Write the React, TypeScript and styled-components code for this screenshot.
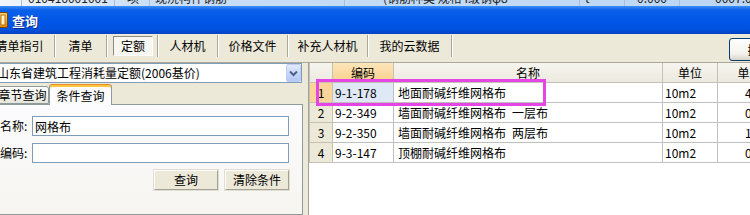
import React from 'react';
import styled, {createGlobalStyle} from 'styled-components';

const GlobalStyle = createGlobalStyle`
  html, body {
    margin: 0;
    padding: 0;
    background: #ece9d8;
  }
  body {
    font-family: "Noto Sans CJK SC", "Noto Sans", sans-serif;
    font-size: 12px;
    color: #000;
  }
`;

type Row = {
    no: number
    code: string
    name: string
    unit: string
    price: string
}

const rows: Row[] = [
    {no: 1, code: '9-1-178', name: '地面耐碱纤维网格布', unit: '10m2', price: '4.58'},
    {no: 2, code: '9-2-349', name: '墙面耐碱纤维网格布\u2002一层布', unit: '10m2', price: '0.91'},
    {no: 3, code: '9-2-350', name: '墙面耐碱纤维网格布\u2002两层布', unit: '10m2', price: '1.73'},
    {no: 4, code: '9-3-147', name: '顶棚耐碱纤维网格布', unit: '10m2', price: '0.62'},
]

const tabs = [
    {label: '清单指引', width: 70},
    {label: '清单', width: 52},
    {label: '定额', width: 51, pressed: true},
    {label: '人材机', width: 60},
    {label: '价格文件', width: 70},
    {label: '补充人材机', width: 80},
    {label: '我的云数据', width: 84},
]

export default function App() {
    return (
        <Window>
            <GlobalStyle/>
            <BackStrip>
                <BackCell $w={22}/>
                <BackCell $w={93} $pad={6}>010416001001</BackCell>
                <BackCell $w={35} $pad={12}>项</BackCell>
                <BackCell $w={195} $pad={5}>现浇构件钢筋</BackCell>
                <BackCell $w={235} $pad={38}>(钢筋种类 规格 I级钢φ8</BackCell>
                <BackCell $w={45} $pad={5}>t</BackCell>
                <BackCell $w={55} $pad={12}>0.000</BackCell>
                <BackCell $w={80} $pad={35}>0007.0</BackCell>
            </BackStrip>

            <TitleBar>
                <svg width="16" height="16" viewBox="0 0 16 16" style={{marginLeft: -8, flexShrink: 0}}>
                    <defs>
                        <linearGradient id="ic" x1="0" y1="0" x2="0" y2="1">
                            <stop offset="0" stopColor="#ffd870"/>
                            <stop offset="1" stopColor="#e88a10"/>
                        </linearGradient>
                    </defs>
                    <rect x="0.5" y="0.5" width="15" height="15" rx="1.5" fill="url(#ic)" stroke="#7a4300"/>
                    <rect x="9" y="3" width="4" height="10" fill="#fff3c8" stroke="#a05a00" strokeWidth="0.8"/>
                </svg>
                <Title>查询</Title>
            </TitleBar>

            <ToolBar>
                {tabs.map(t => (
                    <ToolTab key={t.label} $w={t.width}>
                        {t.pressed ? <Pressed>{t.label}</Pressed> : t.label}
                    </ToolTab>
                ))}
                <XpButton>插入</XpButton>
            </ToolBar>

            <Body>
                <LeftPane>
                    <Combo>
                        <ComboText>山东省建筑工程消耗量定额(2006基价)</ComboText>
                        <DropButton>
                            <svg width="9" height="7" viewBox="0 0 9 7">
                                <path d="M1 1.5 L4.5 5 L8 1.5" fill="none" stroke="#4d6185" strokeWidth="2"/>
                            </svg>
                        </DropButton>
                    </Combo>
                    <TabStrip>
                        <PageTab $w={53}>章节查询</PageTab>
                        <PageTab $w={63} $active>条件查询</PageTab>
                    </TabStrip>
                    <TabPage>
                        <FieldRow>
                            <Label>名称:</Label>
                            <TextInput defaultValue="网格布"/>
                        </FieldRow>
                        <FieldRow>
                            <Label>编码:</Label>
                            <TextInput defaultValue=""/>
                        </FieldRow>
                        <ButtonRow>
                            <FlatButton>查询</FlatButton>
                            <FlatButton>清除条件</FlatButton>
                        </ButtonRow>
                    </TabPage>
                </LeftPane>

                <Splitter/>

                <GridArea>
                    <Table>
                        <colgroup>
                            <col style={{width: 23}}/>
                            <col style={{width: 61}}/>
                            <col style={{width: 269}}/>
                            <col style={{width: 55}}/>
                            <col style={{width: 64}}/>
                        </colgroup>
                        <thead>
                        <tr>
                            <HeadCell/>
                            <HeadCell $active>编码</HeadCell>
                            <HeadCell>名称</HeadCell>
                            <HeadCell>单位</HeadCell>
                            <HeadCell>单价</HeadCell>
                        </tr>
                        </thead>
                        <tbody>
                        {rows.map(r => (
                            <tr key={r.no}>
                                <RowHead $active={r.no === 1}>{r.no}</RowHead>
                                <Cell $focus={r.no === 1}>{r.code}</Cell>
                                <Cell $pad={4}>{r.name}</Cell>
                                <Cell>{r.unit}</Cell>
                                <Cell $pad={27}>{r.price}</Cell>
                            </tr>
                        ))}
                        </tbody>
                    </Table>
                    <Marker/>
                </GridArea>
            </Body>
        </Window>
    );
}

const Window = styled.div`
  width: 750px;
  height: 215px;
  overflow: hidden;
  display: flex;
  flex-direction: column;
  background: #ece9d8;
`

const BackStrip = styled.div`
  height: 6px;
  flex-shrink: 0;
  display: flex;
  overflow: hidden;
  background: linear-gradient(to right, #f2f6fb 0, #c9def5 20%, #bcd6f3 100%);
`

const BackCell = styled.div<{ $w: number, $pad?: number }>`
  width: ${p => p.$w}px;
  flex-shrink: 0;
  box-sizing: border-box;
  padding-left: ${p => p.$pad ?? 0}px;
  margin-top: -9px;
  line-height: 14px;
  height: 15px;
  white-space: nowrap;
  border-right: 1px solid #a9c0dc;
  color: #222;
`

const TitleBar = styled.div`
  height: 28px;
  flex-shrink: 0;
  display: flex;
  align-items: center;
  gap: 4px;
  background: linear-gradient(to bottom, #3d8ef6 0%, #0b60ea 14%, #0056e6 55%, #0052df 82%, #0242c4 100%);
`

const Title = styled.span`
  font-size: 13px;
  font-weight: bold;
  color: #fff;
  line-height: 16px;
  margin-top: 2px;
  text-shadow: 1px 1px 0 #0a2a8a;
`

const ToolBar = styled.div`
  height: 29px;
  flex-shrink: 0;
  box-sizing: border-box;
  display: flex;
  align-items: flex-start;
  padding-top: 1px;
  margin-left: -15px;
  border-bottom: 1px solid #aca899;
`

const ToolTab = styled.div<{ $w: number }>`
  width: ${p => p.$w}px;
  height: 22px;
  flex-shrink: 0;
  box-sizing: border-box;
  display: flex;
  align-items: center;
  justify-content: center;
  border-right: 1px solid #aca899;
  box-shadow: 1px 0 0 #fff;
  line-height: 14px;
  white-space: nowrap;
`

const Pressed = styled.div`
  width: 40px;
  height: 20px;
  box-sizing: border-box;
  margin-left: 2px;
  display: flex;
  align-items: center;
  justify-content: center;
  background: #f7f6f0;
  border: 1px solid;
  border-color: #8d8b80 #fff #fff #8d8b80;
`

const XpButton = styled.div`
  margin-left: auto;
  margin-right: -40px;
  margin-top: 3px;
  width: 61px;
  height: 23px;
  box-sizing: border-box;
  display: flex;
  align-items: center;
  justify-content: center;
  border: 1px solid #003c74;
  border-radius: 3px;
  background: linear-gradient(to bottom, #fff 0%, #f3f2ed 70%, #d8d3c6 100%);
`

const Body = styled.div`
  flex: 1;
  display: flex;
  min-height: 0;
`

const LeftPane = styled.div`
  width: 303px;
  flex-shrink: 0;
  display: flex;
  flex-direction: column;
`

const Combo = styled.div`
  height: 20px;
  width: 306px;
  margin-left: -4px;
  box-sizing: border-box;
  display: flex;
  align-items: center;
  border: 1px solid #7f9db9;
  background: #fff;
`

const ComboText = styled.div`
  flex: 1;
  padding-left: 0;
  line-height: 16px;
  white-space: nowrap;
  overflow: hidden;
`

const DropButton = styled.div`
  width: 15px;
  height: 18px;
  box-sizing: border-box;
  display: flex;
  align-items: center;
  justify-content: center;
  border: 1px solid #bccdf3;
  border-radius: 2px;
  background: linear-gradient(to bottom, #e3ebfd 0%, #c8d7fa 50%, #b4c8f5 100%);
`

const TabStrip = styled.div`
  height: 21px;
  flex-shrink: 0;
  display: flex;
  align-items: flex-end;
  margin-left: -4px;
  position: relative;
  z-index: 1;
`

const PageTab = styled.div<{ $w: number, $active?: boolean }>`
  width: ${p => p.$w}px;
  height: ${p => p.$active ? 21 : 18}px;
  margin-bottom: ${p => p.$active ? -1 : 0}px;
  box-sizing: border-box;
  display: flex;
  align-items: center;
  justify-content: center;
  padding-top: ${p => p.$active ? 1 : 0}px;
  border: 1px solid #919b9c;
  border-bottom: ${p => p.$active ? 'none' : '1px solid #919b9c'};
  border-top-color: ${p => p.$active ? '#e68b2c' : '#919b9c'};
  border-radius: 3px 3px 0 0;
  background: ${p => p.$active ? '#fcfcfe' : 'linear-gradient(to bottom, #fff 0%, #f3f3ef 50%, #e6e4da 100%)'};
  box-shadow: ${p => p.$active ? 'inset 0 2px 0 #ffc73c' : 'none'};
  line-height: 14px;
  white-space: nowrap;
`

const TabPage = styled.div`
  flex: 1;
  margin-left: -4px;
  box-sizing: border-box;
  padding: 11px 13px 0 3px;
  border: 1px solid #919b9c;
  background: linear-gradient(to bottom, #fcfcfe 0%, #f6f5f0 100%);
  display: flex;
  flex-direction: column;
  gap: 7px;
`

const FieldRow = styled.div`
  display: flex;
  align-items: center;
  height: 20px;
`

const Label = styled.div`
  width: 32px;
  flex-shrink: 0;
  line-height: 14px;
  white-space: nowrap;
`

const TextInput = styled.input`
  flex: 1;
  min-width: 0;
  height: 20px;
  box-sizing: border-box;
  margin: 0;
  padding: 0 2px;
  border: 1px solid #7f9db9;
  background: #fff;
  font: inherit;
  font-size: 12px;
  outline: none;
`

const ButtonRow = styled.div`
  display: flex;
  justify-content: flex-end;
  gap: 7px;
`

const FlatButton = styled.div`
  width: 64px;
  height: 20px;
  box-sizing: border-box;
  display: flex;
  align-items: center;
  justify-content: center;
  background: #ece9d8;
  border: 1px solid;
  border-color: #fff #a5a293 #a5a293 #fff;
  box-shadow: 0 0 0 1px #e0ded2;
  line-height: 14px;
`

const Splitter = styled.div`
  width: 5px;
  flex-shrink: 0;
  background: #ece9d8;
`

const GridArea = styled.div`
  flex: 1;
  position: relative;
  overflow: hidden;
  background: #fff;
  border-left: 1px solid #a0a0a0;
`

const Table = styled.table`
  border-collapse: collapse;
  table-layout: fixed;
  width: 472px;
`

const HeadCell = styled.th<{ $active?: boolean }>`
  height: 19px;
  padding: 0;
  font-weight: normal;
  text-align: center;
  line-height: 14px;
  white-space: nowrap;
  border: 1px solid #c5c2b2;
  border-top: none;
  background: ${p => p.$active
    ? 'linear-gradient(to bottom, #fde6ba 0%, #f9cf8c 100%)'
    : 'linear-gradient(to bottom, #f6f5ef 0%, #ebe9df 100%)'};
`

const RowHead = styled.td<{ $active?: boolean }>`
  height: 19px;
  padding: 0;
  text-align: center;
  line-height: 14px;
  border: 1px solid #c5c2b2;
  background: ${p => p.$active ? '#fbd49a' : '#ece9d8'};
`

const Cell = styled.td<{ $focus?: boolean, $pad?: number }>`
  height: 19px;
  padding: 0 0 0 ${p => p.$pad ?? 2}px;
  line-height: 14px;
  white-space: nowrap;
  overflow: hidden;
  border: 1px solid #c0c0c0;
  background: ${p => p.$focus ? '#dfe8f6' : '#fff'};
`

const Marker = styled.div`
  position: absolute;
  left: 7px;
  top: 16px;
  width: 230px;
  height: 27px;
  box-sizing: border-box;
  border: 3px solid #e545e5;
  pointer-events: none;
`
